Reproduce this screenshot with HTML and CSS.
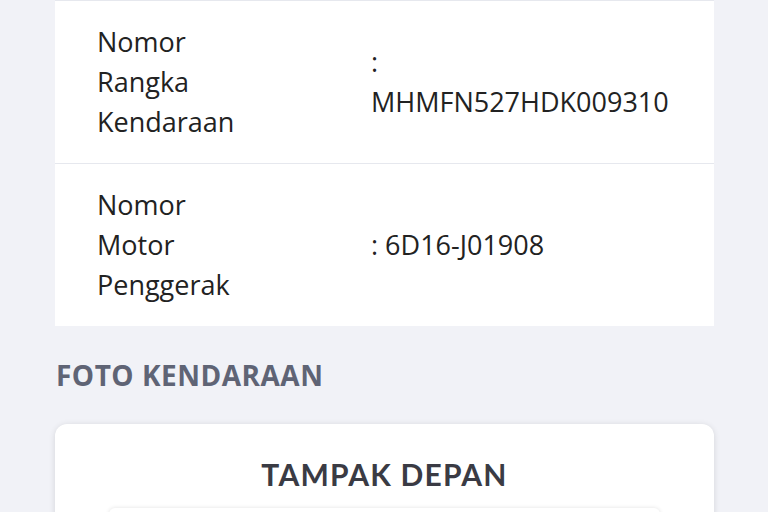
FILE: index.html
```html
<!DOCTYPE html>
<html lang="id">
<head>
    <meta charset="UTF-8">
    <meta name="viewport" content="width=device-width, initial-scale=1.0">
    <title>Detail Kendaraan</title>
    <link rel="stylesheet" href="styles.css">
</head>
<body>

<div class="container">
    <div class="info-table">
        <div class="info-row">
            <div class="info-label">Nomor Rangka Kendaraan</div>
            <div class="info-value">: MHMFN527HDK009310</div>
        </div>
        <div class="info-row">
            <div class="info-label">Nomor Motor Penggerak</div>
            <div class="info-value">: 6D16-J01908</div>
        </div>
    </div>

    <h2 class="section-title">FOTO KENDARAAN</h2>

    <div class="photo-card">
        <h3 class="photo-title">TAMPAK DEPAN</h3>
        <div class="photo-box"></div>
    </div>
</div>

</body>
</html>
```

FILE: styles.css
```css
body {
    font-family: "Open Sans", "Noto Sans", sans-serif;
    background-color: #f1f2f7;
    margin: 0;
    color: #222;
}

.container {
    padding: 0 54px 0 55px;
}

.info-table {
    background-color: white;
    border-top: 1px solid #e6e8ee;
}

.info-row {
    display: grid;
    grid-template-columns: 274px 305px;
    align-items: center;
    padding: 21px 0 21px 42px;
    border-bottom: 1px solid #e6e8ee;
    font-size: 27px;
    line-height: 40px;
}

.info-row:last-child {
    border-bottom: none;
}

.info-label {
    max-width: 170px;
}

.section-title {
    margin: 30px 0 30px 1px;
    font-size: 28px;
    font-weight: bold;
    letter-spacing: 0.5px;
    color: #5f6475;
}

.photo-card {
    background-color: white;
    border-radius: 12px;
    box-shadow: 0 1px 6px rgba(0, 0, 0, 0.12);
    padding: 32px 54px 0 54px;
    height: 200px;
}

.photo-title {
    margin: 0 0 16px 0;
    text-align: center;
    font-family: Lato, sans-serif;
    font-size: 30px;
    font-weight: bold;
    letter-spacing: 1.2px;
    color: #3a3b44;
}

.photo-box {
    height: 200px;
    background-color: white;
    border-radius: 6px;
    box-shadow: 0 0 4px rgba(0, 0, 0, 0.12);
}
```
